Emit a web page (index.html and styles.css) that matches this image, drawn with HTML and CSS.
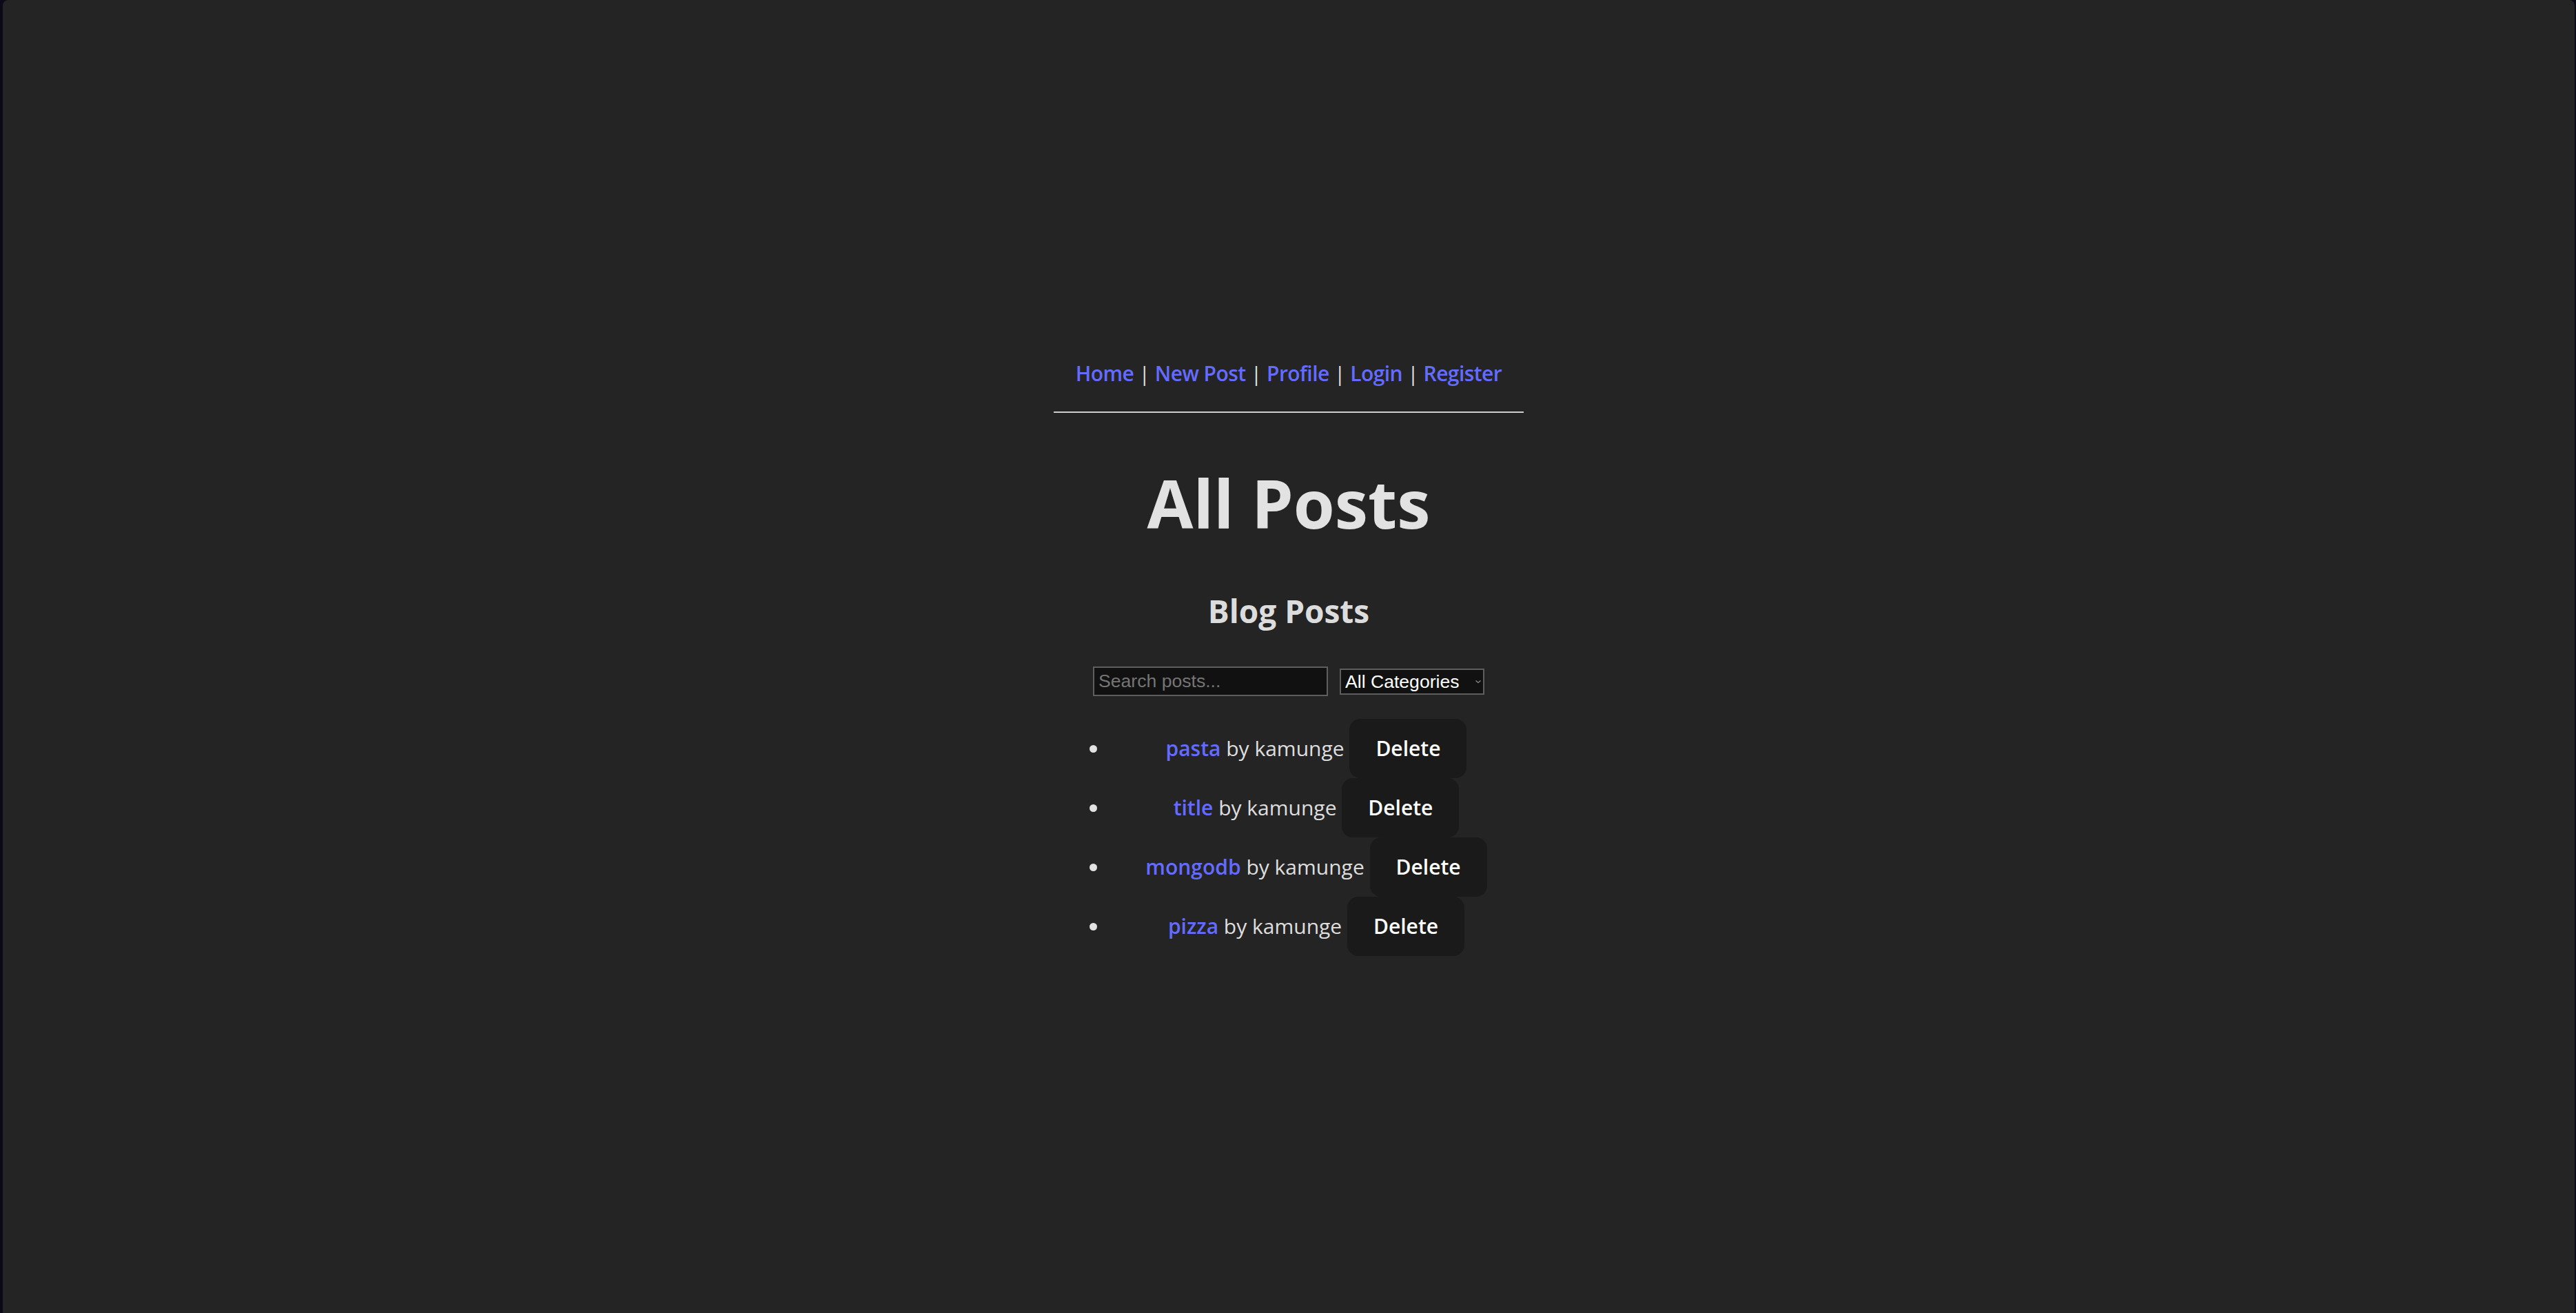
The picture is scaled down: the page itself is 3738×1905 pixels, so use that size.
FILE: index.html
```html
<!DOCTYPE html>
<html lang="en">
<head>
<meta charset="utf-8">
<title>Blog</title>
<link rel="stylesheet" href="styles.css">
</head>
<body>
<div class="app">
  <div class="root">
    <nav class="nav">
      <div class="nav-links"><a href="#">Home</a> | <a href="#">New Post</a> | <a href="#">Profile</a> | <a href="#">Login</a> | <a href="#">Register</a></div>
      <hr class="rule">
    </nav>
    <h1 class="title">All Posts</h1>
    <h2 class="subtitle">Blog Posts</h2>
    <div class="filters">
      <input class="search" type="text" placeholder="Search posts...">
      <span class="select-wrap">
        <select class="category"><option>All Categories</option></select>
        <svg class="chev" width="10" height="8" viewBox="0 0 10 8"><path d="M1.5 2.5 L5 5.5 L8.5 2.5" fill="none" stroke="#8a8a8a" stroke-width="1.3"/></svg>
      </span>
    </div>
    <ul class="posts">
      <li><a href="#">pasta</a> by kamunge <button class="del">Delete</button></li>
      <li><a href="#">title</a> by kamunge <button class="del">Delete</button></li>
      <li><a href="#">mongodb</a> by kamunge <button class="del">Delete</button></li>
      <li><a href="#">pizza</a> by kamunge <button class="del">Delete</button></li>
    </ul>
  </div>
</div>
</body>
</html>
```
FILE: styles.css
```css
html, body {
  margin: 0;
  padding: 0;
}
body {
  background: #0b0a18;
  font-family: "Open Sans", "Noto Sans", sans-serif;
  font-size: 30px;
  line-height: 1.5;
  color: rgba(255, 255, 255, 0.87);
}
.app {
  margin: 0 2px 0 4px;
  min-height: 100vh;
  background: #242424;
  border-radius: 8px 8px 0 0;
  display: flex;
  align-items: center;
  justify-content: center;
}
.root {
  padding: 64px;
  text-align: center;
}
.nav {
  padding: 32px 32px 0;
}
.nav-links {
  line-height: 48px;
  white-space: nowrap;
  letter-spacing: -0.55px;
}
a {
  color: #646cff;
  font-weight: 600;
  text-decoration: none;
}
.rule {
  margin: 31px -32px 0;
  border: 0;
  border-top: 2px solid #cfcfcf;
  height: 0;
}
.title {
  font-size: 97px;
  line-height: 113px;
  font-weight: 700;
  margin: 74px 0 0;
}
.subtitle {
  font-size: 46px;
  line-height: 72px;
  font-weight: 700;
  margin: 64px 0 0;
}
.filters {
  margin-top: 45px;
  display: flex;
  justify-content: center;
  align-items: center;
  gap: 17px;
}
.search {
  box-sizing: border-box;
  width: 341px;
  height: 43px;
  background: #111111;
  border: 2px solid #5e5e5e;
  color: #e0e0e0;
  font-family: "Liberation Sans", Arial, sans-serif;
  font-size: 26.6px;
  padding: 0 6px;
  outline: none;
}
.search::placeholder {
  color: #757575;
}
.select-wrap {
  position: relative;
  display: inline-block;
}
.category {
  -webkit-appearance: none;
  appearance: none;
  box-sizing: border-box;
  width: 210px;
  height: 38px;
  background: #111111;
  border: 2px solid #5e5e5e;
  border-radius: 0;
  color: #ffffff;
  font-family: "Liberation Sans", Arial, sans-serif;
  font-size: 26.6px;
  padding: 0 6px;
  display: block;
}
.chev {
  position: absolute;
  right: 4px;
  top: 15px;
}
.posts {
  margin: 33px 0 32px;
  padding-left: 80px;
}
.posts li {
  line-height: 48px;
}
.del {
  font-family: inherit;
  font-size: 30px;
  font-weight: 600;
  line-height: 48px;
  color: #ffffff;
  background: #1a1a1a;
  border: 2px solid transparent;
  border-radius: 16px;
  padding: 17px 36px;
  cursor: pointer;
}
```
